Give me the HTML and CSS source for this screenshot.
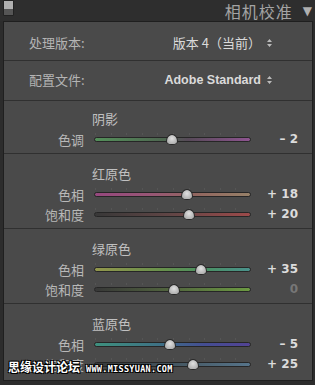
FILE: index.html
```html
<!DOCTYPE html>
<html lang="zh-CN">
<head>
    <meta charset="UTF-8">
    <meta name="viewport" content="width=device-width, initial-scale=1.0">
    <title>相机校准</title>
    <link rel="stylesheet" href="styles.css">
</head>
<body>
    <div class="Header">
        <span class="switch"></span>
        <span class="title">相机校准</span>
        <span class="arrow">▼</span>
    </div>
    <div class="Panel">
        <div class="pick first">
            <span class="pick-label">处理版本:</span>
            <span class="pick-value">版本 4（当前）<svg class="updown" width="5" height="8" viewBox="0 0 5 8"><path d="M2.5 0 L5 3 L0 3 Z M0 5 L5 5 L2.5 8 Z" fill="#bbb"/></svg></span>
        </div>
        <div class="pick second">
            <span class="pick-label">配置文件:</span>
            <span class="pick-value latin">Adobe Standard<svg class="updown" width="5" height="8" viewBox="0 0 5 8"><path d="M2.5 0 L5 3 L0 3 Z M0 5 L5 5 L2.5 8 Z" fill="#bbb"/></svg></span>
        </div>

        <div class="group shadow">
            <div class="group-title">阴影</div>
            <div class="row">
                <span class="lbl">色调</span>
                <div class="track tint"><span class="thumb" style="left: 49%"></span></div>
                <span class="val">– 2</span>
            </div>
        </div>

        <div class="group">
            <div class="group-title">红原色</div>
            <div class="row">
                <span class="lbl">色相</span>
                <div class="track red-hue"><span class="thumb" style="left: 59%"></span></div>
                <span class="val">+ 18</span>
            </div>
            <div class="row">
                <span class="lbl">饱和度</span>
                <div class="track red-sat"><span class="thumb" style="left: 60%"></span></div>
                <span class="val">+ 20</span>
            </div>
        </div>

        <div class="group">
            <div class="group-title">绿原色</div>
            <div class="row">
                <span class="lbl">色相</span>
                <div class="track green-hue"><span class="thumb" style="left: 67.5%"></span></div>
                <span class="val">+ 35</span>
            </div>
            <div class="row">
                <span class="lbl">饱和度</span>
                <div class="track green-sat"><span class="thumb" style="left: 50%"></span></div>
                <span class="val zero">0</span>
            </div>
        </div>

        <div class="group last">
            <div class="group-title">蓝原色</div>
            <div class="row">
                <span class="lbl">色相</span>
                <div class="track blue-hue"><span class="thumb" style="left: 47.5%"></span></div>
                <span class="val">– 5</span>
            </div>
            <div class="row">
                <span class="lbl">饱和度</span>
                <div class="track blue-sat"><span class="thumb" style="left: 62.5%"></span></div>
                <span class="val">+ 25</span>
            </div>
        </div>

        <div class="mark"><span class="mark-cn">思缘设计论坛</span><span class="mark-en">WWW.MISSYUAN.COM</span></div>
    </div>
</body>
</html>
```

FILE: styles.css
```css
body{
    margin: 0;
    background-color: #2c2c2c;
    font-family: "Noto Sans CJK SC", "Noto Sans", sans-serif;
    color: #b8b8b8;
    font-size: 13px;
}
.Header{
    display: flex;
    align-items: center;
    height: 21px;
    padding: 0 3px;
    background-color: #2e2e2e;
}
.switch{
    width: 9px;
    height: 14px;
    margin-top: -6px;
    border-radius: 1px;
    background: linear-gradient(#b0b0b0 0, #b0b0b0 55%, #555 55%, #555 100%);
    border: 1px solid #222;
}
.title{
    margin-left: auto;
    font-size: 16px;
    line-height: 20px;
    letter-spacing: 1px;
    color: #a4a4a4;
}
.arrow{
    margin-left: 10px;
    font-size: 12px;
    color: #b0b0b0;
    font-family: "DejaVu Sans", sans-serif;
}
.Panel{
    position: relative;
    margin: 0 2px 0 3px;
    height: 358px;
    background-color: #4a4a4a;
    border: 1px solid #1f1f1f;
    overflow: hidden;
}
.pick{
    display: flex;
    align-items: center;
    padding: 0 40px 0 25px;
    line-height: 20px;
}
.pick.first{
    padding-top: 11px;
    padding-bottom: 7px;
}
.pick.second{
    padding-top: 9px;
    padding-bottom: 10px;
    border-top: 1px solid #303030;
}
.pick-label{
    color: #b4b4b4;
}
.pick-value{
    margin-left: auto;
    display: flex;
    align-items: center;
    color: #dadada;
}
.pick-value.latin{
    font-family: "Liberation Sans", "Noto Sans CJK SC", sans-serif;
    font-weight: bold;
    font-size: 12.5px;
}
.updown{
    margin-left: 6px;
}
.group{
    border-top: 1px solid #303030;
    padding: 10px 0 4px;
}
.group.shadow{
    padding-top: 8px;
    padding-bottom: 4px;
}
.group.last{
    padding-bottom: 8px;
}
.group-title{
    padding-left: 88px;
    line-height: 20px;
    color: #c0c0c0;
}
.row{
    display: grid;
    grid-template-columns: 90px 157px 47px;
    align-items: center;
    height: 20px;
}
.lbl{
    text-align: right;
    padding-right: 10px;
    color: #b8b8b8;
}
.val{
    text-align: right;
    font-family: "DejaVu Sans", sans-serif;
    font-weight: bold;
    font-size: 12px;
    color: #dcdcdc;
}
.val.zero{
    color: #777;
}
.track{
    position: relative;
    height: 3px;
    border: 1px solid #262626;
    border-radius: 3px;
}
.track::before{
    content: "";
    position: absolute;
    left: 0;
    right: 0;
    top: -5px;
    height: 2px;
    background: repeating-linear-gradient(90deg, #555 0, #555 1px, transparent 1px, transparent 15.6px);
}
.thumb{
    position: absolute;
    top: -4px;
    width: 10px;
    height: 9px;
    margin-left: -5px;
    background: radial-gradient(circle at 50% 40%, #e0e0e0, #a0a0a0);
    border: 1px solid #2a2a2a;
    border-radius: 50% 50% 45% 45% / 65% 65% 35% 35%;
}
.tint{
    background: linear-gradient(90deg, #54905a, #4e6650 45%, #574a58 60%, #8e5490);
}
.red-hue{
    background: linear-gradient(90deg, #96487e, #985676 35%, #92665f 65%, #968068);
}
.red-sat{
    background: linear-gradient(90deg, #383838, #624646 50%, #9c4a4a);
}
.green-hue{
    background: linear-gradient(90deg, #92964c, #66904c 45%, #4a9062 70%, #4a928c);
}
.green-sat{
    background: linear-gradient(90deg, #383838, #52663e 50%, #6c9a42);
}
.blue-hue{
    background: linear-gradient(90deg, #3e907e, #3e7284 40%, #444e92 70%, #524394);
}
.blue-sat{
    background: linear-gradient(90deg, #383838, #455660 50%, #56748a);
}
.mark{
    position: absolute;
    left: 4px;
    bottom: 5px;
    display: flex;
    align-items: baseline;
    gap: 6px;
}
.mark-cn{
    font-size: 12px;
    font-weight: bold;
    color: #fff;
    text-shadow: -1px -1px 0 #000, 1px -1px 0 #000, -1px 1px 0 #000, 1px 1px 0 #000;
}
.mark-en{
    font-family: "DejaVu Sans Mono", monospace;
    font-size: 8.5px;
    font-weight: bold;
    letter-spacing: 0.3px;
    color: #fff;
    text-shadow: -1px -1px 0 #000, 1px -1px 0 #000, -1px 1px 0 #000, 1px 1px 0 #000;
}
```
